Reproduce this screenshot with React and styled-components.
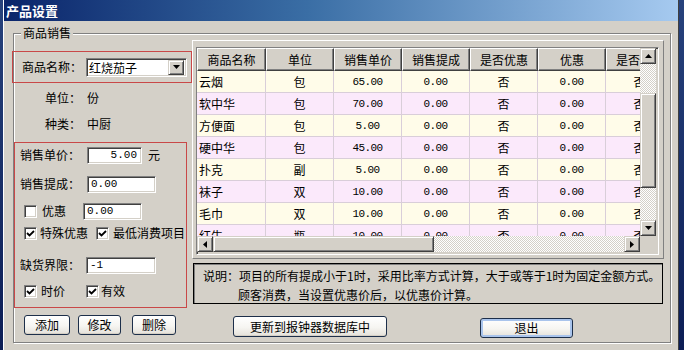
import React from 'react';
import styled, { createGlobalStyle } from 'styled-components';

const GlobalStyle = createGlobalStyle`
  html, body { margin: 0; padding: 0; }
  body {
    width: 684px;
    height: 350px;
    overflow: hidden;
    font-family: "Noto Sans CJK SC", "Noto Sans", sans-serif;
    font-size: 12px;
    color: #000;
  }
`;

const Desktop = styled.div`
  display: flex;
  width: 684px;
  height: 350px;
  background: linear-gradient(#27427c, #0c1d55);
`;

const Window = styled.div`
  margin-left: 3px;
  width: 676px;
  height: 350px;
  box-sizing: border-box;
  background: #d4d0c8;
  border-left: 1px solid #fff;
  border-right: 1px solid #404040;
  display: flex;
  flex-direction: column;
`;

const TitleBar = styled.div`
  height: 21px;
  flex-shrink: 0;
  display: flex;
  align-items: center;
  padding-left: 2px;
  background: linear-gradient(90deg, #0a246a 0%, #3a6ea5 45%, #a6caf0 100%);
  color: #fff;
  font-weight: bold;
  font-size: 13px;
  letter-spacing: 0;
`;

const GroupBox = styled.div`
  position: relative;
  margin: 12px 0 0 9px;
  width: 658px;
  height: 310px;
  box-sizing: border-box;
  border: 1px solid #808080;
  box-shadow: 1px 1px 0 #fff, inset 1px 1px 0 #fff;
  display: flex;
  align-items: flex-start;
`;

const Legend = styled.div`
  position: absolute;
  left: 7px;
  top: -9px;
  height: 16px;
  line-height: 16px;
  padding: 0 2px;
  background: #d4d0c8;
`;

const LeftCol = styled.div`
  width: 180px;
  margin-left: -2px;
  display: flex;
  flex-direction: column;
  flex-shrink: 0;
`;

const RedBox = styled.div`
  box-sizing: border-box;
  border: 1px solid #c94848;
  width: ${p => p.$w}px;
  height: ${p => p.$h}px;
  margin: ${p => p.$mt}px 0 0 ${p => p.$ml || 0}px;
  display: flex;
  flex-direction: ${p => (p.$col ? 'column' : 'row')};
  align-items: ${p => (p.$col ? 'stretch' : 'center')};
  padding-left: ${p => p.$pl || 0}px;
`;

const Label = styled.div`
  width: ${p => p.$w}px;
  flex-shrink: 0;
  white-space: nowrap;
  line-height: 16px;
  margin-left: ${p => p.$ml || 0}px;
`;

const InfoRow = styled.div`
  height: 26px;
  display: flex;
  align-items: center;
  padding-left: 33px;
  margin-top: ${p => p.$mt || 0}px;
`;

const FormRow = styled.div`
  height: 20px;
  display: flex;
  align-items: center;
  margin-top: ${p => p.$mt}px;
  padding-left: ${p => p.$pl}px;
`;

const sunken = `
  box-sizing: border-box;
  background: #fff;
  border: 1px solid;
  border-color: #808080 #fff #fff #808080;
  box-shadow: inset 1px 1px 0 #404040, inset -1px -1px 0 #d4d0c8;
`;

const raised = `
  box-sizing: border-box;
  background: #d4d0c8;
  border: 1px solid;
  border-color: #d4d0c8 #404040 #404040 #d4d0c8;
  box-shadow: inset 1px 1px 0 #fff, inset -1px -1px 0 #808080;
`;

const Field = styled.div`
  ${sunken}
  width: ${p => p.$w}px;
  height: ${p => p.$h || 17}px;
  flex-shrink: 0;
  display: flex;
  align-items: center;
  justify-content: ${p => (p.$right ? 'flex-end' : 'flex-start')};
  padding: 0 4px 0 3px;
  line-height: 13px;
  font-family: "Liberation Mono", "Noto Sans CJK SC", monospace;
  font-size: 11px;
`;

const ComboBox = styled.div`
  ${sunken}
  width: 101px;
  height: 19px;
  display: flex;
  align-items: center;
  padding: 2px;
`;

const ComboText = styled.div`
  flex: 1;
  line-height: 15px;
`;

const DropButton = styled.div`
  ${raised}
  width: 16px;
  height: 15px;
  display: flex;
  align-items: center;
  justify-content: center;
`;

const Unit = styled.div`
  margin-left: 6px;
  line-height: 16px;
`;

const CheckBox = styled.div`
  ${sunken}
  width: 13px;
  height: 13px;
  flex-shrink: 0;
  display: flex;
  align-items: center;
  justify-content: center;
`;

const ButtonRow = styled.div`
  display: flex;
  margin-top: ${p => p.$mt}px;
  padding-left: ${p => p.$pl}px;
  align-items: flex-start;
`;

const Button = styled.div`
  box-sizing: border-box;
  width: ${p => p.$w}px;
  height: ${p => p.$h || 20}px;
  margin-left: ${p => p.$ml || 0}px;
  margin-top: ${p => p.$mt || 0}px;
  border: 1px solid #1d2f4a;
  border-radius: 3px;
  background: linear-gradient(#ffffff 0%, #f6f5f1 55%, #e4e1da 100%);
  box-shadow: ${p => (p.$focus ? 'inset 0 0 0 2px #a9c4ec' : 'inset 0 -1px 0 #d6d0c5')};
  display: flex;
  align-items: center;
  justify-content: center;
  font-size: 12px;
  line-height: 14px;
`;

const RightCol = styled.div`
  width: 472px;
  margin-top: 6px;
  display: flex;
  flex-direction: column;
  flex-shrink: 0;
`;

const GridFrame = styled.div`
  box-sizing: border-box;
  height: 219px;
  border: 1px solid;
  border-color: #fff #808080 #808080 #fff;
  padding: 6px 4px 3px 3px;
`;

const Grid = styled.div`
  ${sunken}
  background: #d4d0c8;
  width: 463px;
  height: 208px;
  display: grid;
  grid-template-columns: 443px 16px;
  grid-template-rows: 188px 16px;
`;

const Viewport = styled.div`
  overflow: hidden;
  background: #fff;
`;

const HeaderRow = styled.div`
  display: flex;
  height: 23px;
`;

const HeaderCell = styled.div`
  width: ${p => p.$w}px;
  flex-shrink: 0;
  box-sizing: border-box;
  border: 1px solid;
  border-color: #fff #404040 #404040 #fff;
  box-shadow: inset -1px -1px 0 #808080;
  background: #d4d0c8;
  display: flex;
  align-items: center;
  justify-content: center;
  white-space: nowrap;
  overflow: hidden;
`;

const BodyRow = styled.div`
  display: flex;
  height: 22px;
  background: ${p => (p.$alt ? '#fbe9fb' : '#fffce9')};
`;

const BodyCell = styled.div`
  width: ${p => p.$w}px;
  flex-shrink: 0;
  box-sizing: border-box;
  border-right: 1px solid #d9ced9;
  border-bottom: 1px solid #d9ced9;
  display: flex;
  align-items: center;
  justify-content: ${p => (p.$left ? 'flex-start' : 'center')};
  padding-left: ${p => (p.$left ? 2 : 0)}px;
  white-space: nowrap;
  overflow: hidden;
`;

const Num = styled.span`
  font-family: "Liberation Mono", monospace;
  font-size: 11px;
  letter-spacing: -0.6px;
`;

const ScrollV = styled.div`
  display: flex;
  flex-direction: column;
`;

const ScrollH = styled.div`
  display: flex;
`;

const ArrowButton = styled.div`
  ${raised}
  width: 16px;
  height: 16px;
  flex-shrink: 0;
  display: flex;
  align-items: center;
  justify-content: center;
`;

const Track = styled.div`
  flex: ${p => (p.$size ? `0 0 ${p.$size}px` : '1')};
  background: repeating-conic-gradient(#fff 0 25%, #d4d0c8 0 50%) 0 0 / 2px 2px;
`;

const Thumb = styled.div`
  ${raised}
  flex: 0 0 ${p => p.$size}px;
`;

const Corner = styled.div`
  background: #d4d0c8;
`;

const NoteBox = styled.div`
  box-sizing: border-box;
  margin: 4px 0 0 1px;
  width: 470px;
  height: 41px;
  border: 1px solid #000;
  box-shadow: inset 1px 1px 0 #808080;
  padding: 2px 0 0 9px;
  line-height: 19px;
  white-space: nowrap;
`;

const NoteLine = styled.div`
  padding-left: ${p => p.$indent || 0}px;
`;

const Arrow = ({ dir }) => {
  const pts = {
    up: '0,4 3.5,0 7,4',
    down: '0,0 3.5,4 7,0',
    left: '4,0 0,3.5 4,7',
    right: '0,0 4,3.5 0,7',
  }[dir];
  const vertical = dir === 'up' || dir === 'down';
  return (
    <svg width={vertical ? 7 : 4} height={vertical ? 4 : 7} viewBox={vertical ? '0 0 7 4' : '0 0 4 7'}>
      <polygon points={pts} fill="#000" />
    </svg>
  );
};

const Check = ({ checked }) => (
  <CheckBox>
    {checked && (
      <svg width="9" height="9" viewBox="0 0 9 9">
        <polyline points="1,4 3.5,6.5 8,2" fill="none" stroke="#000" strokeWidth="1.8" />
      </svg>
    )}
  </CheckBox>
);

const widths = [69, 68, 68, 68, 68, 68, 68];
const headers = ['商品名称', '单位', '销售单价', '销售提成', '是否优惠', '优惠', '是否时价'];
const rows = [
  ['云烟', '包', '65.00'],
  ['软中华', '包', '70.00'],
  ['方便面', '包', '5.00'],
  ['硬中华', '包', '45.00'],
  ['扑克', '副', '5.00'],
  ['袜子', '双', '10.00'],
  ['毛巾', '双', '10.00'],
  ['红牛', '瓶', '10.00'],
];

export default function App() {
  return (
    <>
      <GlobalStyle />
      <Desktop>
        <Window>
          <TitleBar>产品设置</TitleBar>
          <GroupBox>
            <Legend>商品销售</Legend>
            <LeftCol>
              <RedBox $w={180} $h={32} $mt={17} $pl={9}>
                <Label $w={64}>商品名称：</Label>
                <ComboBox>
                  <ComboText>红烧茄子</ComboText>
                  <DropButton><Arrow dir="down" /></DropButton>
                </ComboBox>
              </RedBox>
              <InfoRow $mt={2}>
                <Label $w={42}>单位：</Label>
                <Label>份</Label>
              </InfoRow>
              <InfoRow>
                <Label $w={42}>种类：</Label>
                <Label>中厨</Label>
              </InfoRow>
              <RedBox $w={173} $h={166} $mt={5} $ml={2} $col>
                <FormRow $mt={2} $pl={5}>
                  <Label $w={67}>销售单价：</Label>
                  <Field $w={55} $right>5.00</Field>
                  <Unit>元</Unit>
                </FormRow>
                <FormRow $mt={9} $pl={5}>
                  <Label $w={67}>销售提成：</Label>
                  <Field $w={69}>0.00</Field>
                </FormRow>
                <FormRow $mt={7} $pl={9}>
                  <Check />
                  <Label $w={41} $ml={5}>优惠</Label>
                  <Field $w={59}>0.00</Field>
                </FormRow>
                <FormRow $mt={2} $pl={9}>
                  <Check checked />
                  <Label $w={56} $ml={3}>特殊优惠</Label>
                  <Check checked />
                  <Label $ml={4}>最低消费项目</Label>
                </FormRow>
                <FormRow $mt={12} $pl={5}>
                  <Label $w={66}>缺货界限：</Label>
                  <Field $w={70}>-1</Field>
                </FormRow>
                <FormRow $mt={6} $pl={9}>
                  <Check checked />
                  <Label $w={45} $ml={4}>时价</Label>
                  <Check checked />
                  <Label $ml={2}>有效</Label>
                </FormRow>
              </RedBox>
              <ButtonRow $mt={7} $pl={12}>
                <Button $w={46}>添加</Button>
                <Button $w={43} $ml={8}>修改</Button>
                <Button $w={44} $ml={11}>删除</Button>
              </ButtonRow>
            </LeftCol>
            <RightCol>
              <GridFrame>
                <Grid>
                  <Viewport>
                    <HeaderRow>
                      {headers.map((h, i) => (
                        <HeaderCell key={h} $w={widths[i]}>{h}</HeaderCell>
                      ))}
                    </HeaderRow>
                    {rows.map((r, i) => (
                      <BodyRow key={r[0]} $alt={i % 2 === 1}>
                        <BodyCell $w={widths[0]} $left>{r[0]}</BodyCell>
                        <BodyCell $w={widths[1]}>{r[1]}</BodyCell>
                        <BodyCell $w={widths[2]}><Num>{r[2]}</Num></BodyCell>
                        <BodyCell $w={widths[3]}><Num>0.00</Num></BodyCell>
                        <BodyCell $w={widths[4]}>否</BodyCell>
                        <BodyCell $w={widths[5]}><Num>0.00</Num></BodyCell>
                        <BodyCell $w={widths[6]}>否</BodyCell>
                      </BodyRow>
                    ))}
                  </Viewport>
                  <ScrollV>
                    <ArrowButton><Arrow dir="up" /></ArrowButton>
                    <Track $size={29} />
                    <Thumb $size={95} />
                    <Track />
                    <ArrowButton><Arrow dir="down" /></ArrowButton>
                  </ScrollV>
                  <ScrollH>
                    <ArrowButton><Arrow dir="left" /></ArrowButton>
                    <Thumb $size={221} />
                    <Track />
                    <ArrowButton><Arrow dir="right" /></ArrowButton>
                  </ScrollH>
                  <Corner />
                </Grid>
              </GridFrame>
              <NoteBox>
                <NoteLine>说明：项目的所有提成小于1时，采用比率方式计算，大于或等于1时为固定金额方式。</NoteLine>
                <NoteLine $indent={35}>顾客消费，当设置优惠价后，以优惠价计算。</NoteLine>
              </NoteBox>
              <ButtonRow $mt={12} $pl={41}>
                <Button $w={154} $h={21}>更新到报钟器数据库中</Button>
                <Button $w={93} $ml={93} $mt={2} $focus>退出</Button>
              </ButtonRow>
            </RightCol>
          </GroupBox>
        </Window>
      </Desktop>
    </>
  );
}
